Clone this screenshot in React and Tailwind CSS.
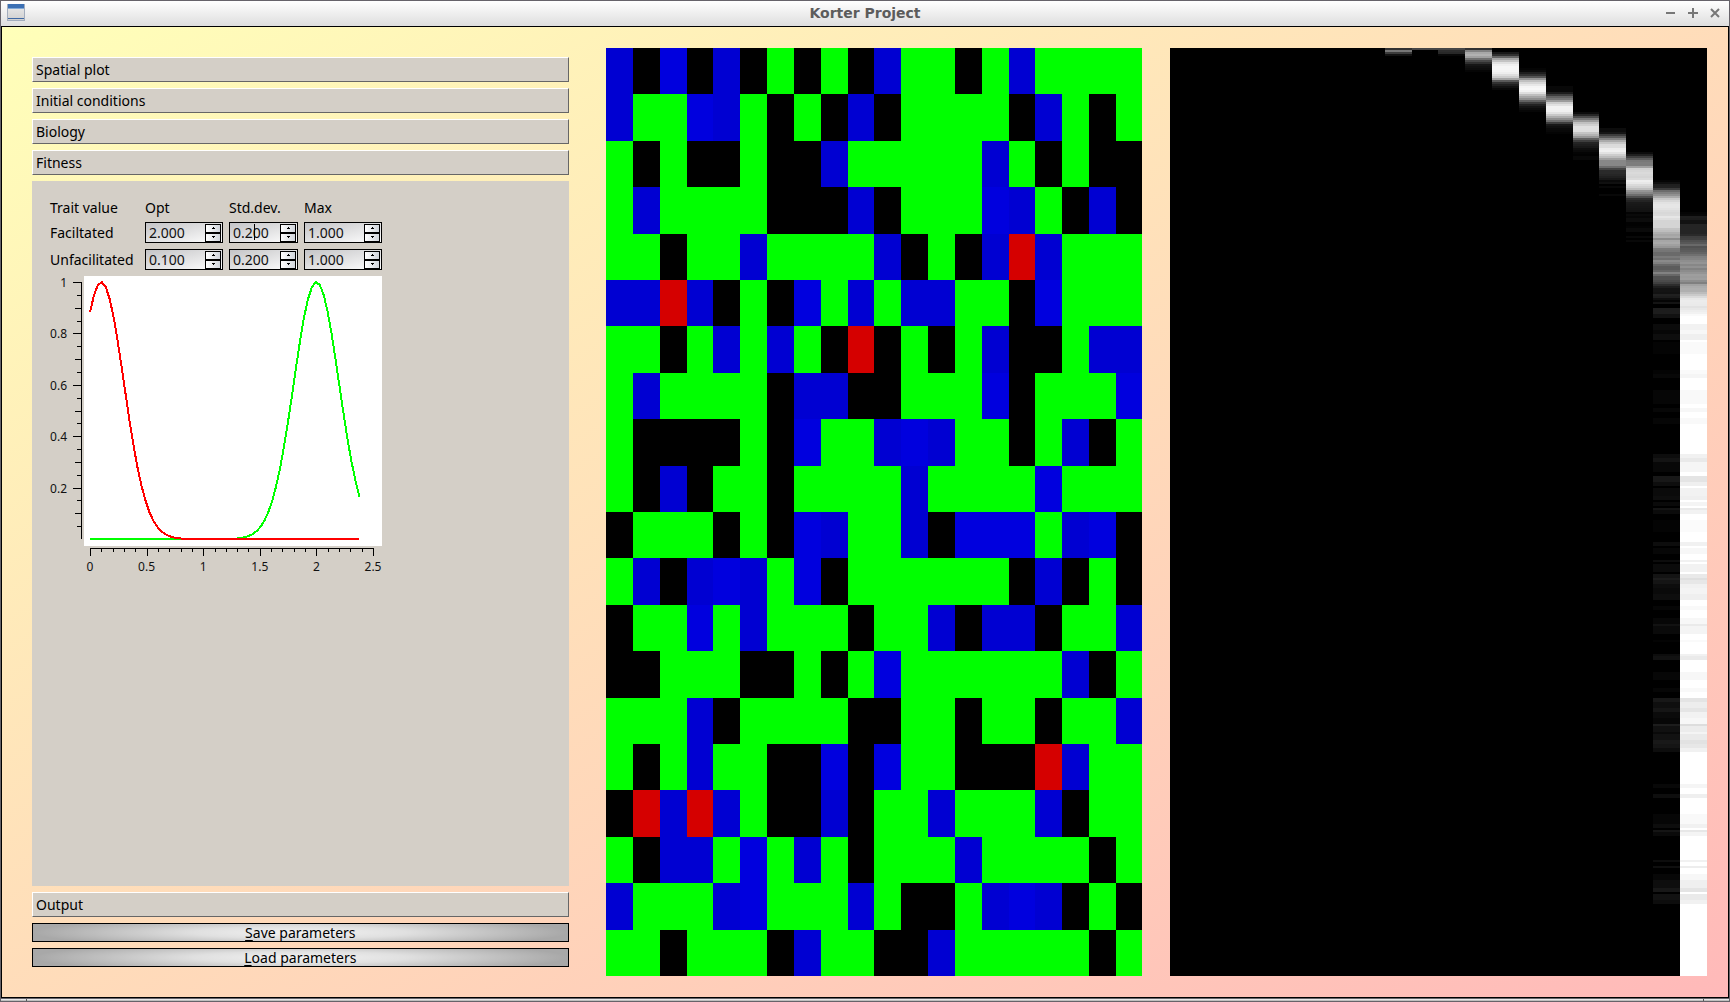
import React from "react";

const CELLS = [
  "BkCkBkGkGkBGGkGBGGGG",
  "BGGCBGkGkBkGGGGkBGkG",
  "GkGkkGkkBGGGGGBGkGkk",
  "GBGGGGkkkBkGGGCBGkBk",
  "GGkGGBGGGGBkGkBRBGGG",
  "BBRBkGkCGBGBBGGkCGGG",
  "GGkGBGBGkRkGkGBkkGBB",
  "GBGGGGkBBkkGGGCkGGGC",
  "GkkkkGkCGGBCBGGkGBkG",
  "GkBkGGkGGGGBGGGGCGGG",
  "kGGGkGkCBGGBkCCCGBCk",
  "GBkBCBGCkGGGGGGkBkGk",
  "kGGCGBGGGkGGBkBBkGGB",
  "kkGGGkkGkGCGGGGGGBkG",
  "GGGBkGGGGkkGGkGGkGGB",
  "GkGBGGkkCkCGGkkkRBGG",
  "kRBRBGkkBkGGBGGGBkGG",
  "GkBBGCGBGkGGGBGGGGkG",
  "BGGGBCGGGBGkkGBCBkGk",
  "GGkGGGkBGGkkBGGGGGkG",
];
const CELL_COLORS = { B: "#0000d2", C: "#0000de", G: "#00ff00", R: "#d50000" };

/* Each column: [first row, gray level per row...] with 464 rows of history. */
const HISTORY = [
  { col: 8, start: 0, values: [50, 118, 60, 18] },
  { col: 9, start: 0, values: [70] },
  { col: 10, start: 0, values: [70, 45, 40, 8] },
  { col: 11, start: 0, values: [50, 130, 168, 178, 160, 112, 72, 48, 22, 16, 12, 5] },
  { col: 12, start: 2, values: [24, 48, 100, 165, 195, 225, 240, 246, 246, 244, 238, 222, 205, 165, 90, 50, 32, 18, 8] },
  { col: 13, start: 10, values: [4, 10, 30, 50, 85, 148, 192, 215, 232, 245, 248, 242, 222, 190, 165, 142, 98, 60, 34, 20, 12, 6] },
  { col: 14, start: 19, values: [8, 8, 8, 28, 62, 98, 118, 155, 205, 225, 242, 242, 240, 226, 200, 172, 142, 110, 62, 24, 16, 10, 8, 4] },
  { col: 15, start: 32, values: [12, 38, 75, 118, 155, 192, 208, 224, 224, 222, 196, 178, 150, 95, 62, 36, 30, 24, 14, 10, 4, 2, 8, 8] },
  { col: 16, start: 40, values: [12, 12, 22, 60, 90, 130, 170, 198, 218, 220, 236, 240, 226, 205, 188, 160, 135, 135, 135, 108, 68, 42, 42, 38, 32, 24, 10, 16, 0, 8, 0, 0, 0, 8] },
  { col: 17, start: 52, values: [12, 32, 62, 92, 120, 125, 125, 160, 208, 214, 218, 215, 212, 218, 238, 232, 218, 208, 190, 150, 135, 110, 78, 45, 36, 26, 24, 22, 20, 18, 4, 10, 6, 12, 12, 2, 2, 4, 10, 10, 0, 0, 8, 0, 8] },
  { col: 18, start: 66, values: [5, 16, 32, 34, 60, 108, 128, 145, 170, 200, 215, 226, 230, 230, 226, 220, 216, 218, 230, 222, 212, 212, 212, 212, 195, 190, 175, 165, 170, 140, 166, 170, 160, 150, 122, 118, 106, 106, 122, 112, 138, 128, 104, 92, 92, 102, 130, 104, 82, 82, 75, 64, 45, 30, 20, 20, 18, 32, 28, 14, 5, 20] },
  { col: 19, start: 82, values: [5, 8, 30, 28, 18, 18, 36, 36, 36, 36, 36, 42, 62, 65, 80, 88, 105, 82, 88, 92, 100, 112, 128, 132, 142, 148, 135, 145, 130, 140, 148, 158, 155, 158, 142, 128, 162, 172, 176, 175, 188, 202, 218, 232, 236, 235, 234, 226, 232, 238, 242, 250] },
];

/* Faint late bands: [first row, rows, level]; the last column is their inverse. */
const BANDS = [
  [126, 4, 30], [130, 3, 42], [133, 2, 26], [138, 3, 16], [141, 2, 10], [143, 3, 20],
  [147, 6, 6], [161, 2, 6], [163, 2, 12], [171, 7, 8], [180, 2, 10], [185, 3, 8],
  [203, 2, 18], [205, 2, 28], [207, 5, 12], [214, 3, 34], [217, 2, 20], [220, 4, 16],
  [224, 2, 20], [227, 2, 14], [230, 1, 28], [231, 2, 16], [236, 6, 5], [247, 2, 18],
  [250, 3, 10], [256, 1, 18], [258, 4, 16], [263, 2, 28], [265, 1, 40], [266, 2, 30],
  [268, 2, 18], [270, 3, 14], [273, 3, 20], [279, 2, 8], [285, 3, 10], [288, 1, 26],
  [289, 4, 14], [296, 1, 6], [303, 1, 18], [304, 2, 26], [312, 4, 10], [320, 2, 8],
  [325, 2, 34], [327, 3, 22], [330, 2, 32], [332, 3, 16], [335, 3, 10], [338, 1, 42],
  [339, 3, 24], [342, 1, 14], [343, 3, 26], [346, 2, 36], [348, 2, 30], [350, 2, 18],
  [368, 2, 12], [373, 2, 20], [383, 5, 8], [388, 2, 18], [391, 1, 30], [392, 2, 14],
  [406, 1, 18], [409, 1, 22], [413, 3, 10], [416, 4, 20], [420, 2, 34], [423, 3, 26],
  [426, 2, 18],
];

const gray = (v) => `rgb(${v},${v},${v})`;

function SpatialPlot() {
  return (
    <svg className="h-full min-w-0 flex-1 bg-black" viewBox="0 0 20 20" preserveAspectRatio="none" shapeRendering="crispEdges" role="img" aria-label="Spatial plot">
      {CELLS.flatMap((row, y) =>
        [...row].map((c, x) =>
          c === "k" ? null : <rect key={`${x}-${y}`} x={x} y={y} width="1" height="1" fill={CELL_COLORS[c]} />
        )
      )}
    </svg>
  );
}

function TraitHistory() {
  return (
    <svg className="h-full min-w-0 flex-1 bg-black" viewBox="0 0 20 464" preserveAspectRatio="none" shapeRendering="crispEdges" role="img" aria-label="Trait history">
      <rect x="19" y="134" width="1" height="330" fill="#ffffff" />
      {HISTORY.flatMap(({ col, start, values }) =>
        values.map((v, i) => <rect key={`${col}-${i}`} x={col} y={start + i} width="1" height="1" fill={gray(v)} />)
      )}
      {BANDS.map(([y, h, v]) => (
        <g key={y}>
          {y > 127 && <rect x="18" y={y} width="1" height={h} fill={gray(Math.round(v * 0.7))} />}
          {y > 133 && <rect x="19" y={y} width="1" height={h} fill={gray(255 - Math.round(v * 0.8))} />}
        </g>
      ))}
    </svg>
  );
}

const px = (t) => 6 + (t * 283) / 2.5;
const py = (f) => 263 - f * 257;
function curve(opt) {
  const pts = [];
  for (let i = 0; i <= 68; i++) {
    const t = i * 0.035;
    pts.push(`${px(t).toFixed(1)},${py(Math.exp(-((t - opt) ** 2) / 0.08)).toFixed(1)}`);
  }
  return pts.join(" ");
}

function FitnessChart() {
  return (
    <svg width="340" height="304" viewBox="-38 0 340 304" className="block overflow-visible" role="img" aria-label="Fitness curves">
      <rect x="0" y="0" width="298" height="270" fill="#fff" />
      <polyline points={curve(2)} fill="none" stroke="#00ff00" strokeWidth="2" shapeRendering="crispEdges" />
      <polyline points={curve(0.1)} fill="none" stroke="#ff0000" strokeWidth="2" shapeRendering="crispEdges" />
      <g stroke="#000" strokeWidth="1" shapeRendering="crispEdges">
        <line x1="-2.5" y1="6" x2="-2.5" y2="263" />
        {Array.from({ length: 20 }, (_, i) => {
          const y = Math.round(py((i + 1) / 20)) + 0.5;
          const n = (i + 1) % 4 === 0 ? 9 : (i + 1) % 2 === 0 ? 7 : 5;
          return <line key={i} x1={-2 - n} x2="-2" y1={y} y2={y} />;
        })}
        <line x1="6" y1="272.5" x2="290" y2="272.5" />
        {Array.from({ length: 26 }, (_, i) => {
          const x = Math.round(px(i / 10)) + 0.5;
          return <line key={i} x1={x} x2={x} y1="272" y2={i % 5 === 0 ? 280 : 276} />;
        })}
      </g>
      <g fontSize="12" fill="#111">
        {[0.2, 0.4, 0.6, 0.8, 1].map((v) => (
          <text key={v} x="-17" y={py(v) + 5} textAnchor="end">{v}</text>
        ))}
        {[0, 0.5, 1, 1.5, 2, 2.5].map((v) => (
          <text key={v} x={px(v)} y="295" textAnchor="middle">{v}</text>
        ))}
      </g>
    </svg>
  );
}

function StepButton({ label, up }) {
  return (
    <button type="button" aria-label={label} className="flex h-[9px] w-4 items-center justify-center border border-black bg-linear-to-r from-white to-gray-300">
      <svg width="3" height="2" viewBox="0 0 3 2" shapeRendering="crispEdges" aria-hidden="true">
        <path d={up ? "M1 0h1v1h1v1H0V1h1z" : "M0 0h3v1H2v1H1V1H0z"} fill="#000" />
      </svg>
    </button>
  );
}

function SpinBox({ label, value, caret }) {
  return (
    <div className="relative flex h-[21px] items-center border border-black bg-linear-to-br from-[#c4c4c6] to-white pr-px">
      <input aria-label={label} defaultValue={value} className="h-full w-0 min-w-0 flex-1 bg-transparent pl-[3px] text-sm text-[#111] outline-none" />
      {caret && <span className="absolute top-px left-6 h-4 w-px bg-black" />}
      <div className="flex flex-col">
        <StepButton up label={`Increase ${label}`} />
        <StepButton label={`Decrease ${label}`} />
      </div>
    </div>
  );
}

function SectionBar({ children }) {
  return (
    <button type="button" className="h-[25px] shrink-0 border border-t-white border-l-white border-r-[#666] border-b-[#666] bg-[#d4cfc7] pl-[3px] text-left text-sm leading-none">
      {children}
    </button>
  );
}

function ActionButton({ mnemonic, children }) {
  return (
    <button type="button" className="flex h-[19px] shrink-0 items-center justify-center border border-black bg-[radial-gradient(ellipse_50%_90%_at_center,#f2f2f2_0%,#e0e0e0_40%,#a8a8a8_100%)] text-sm leading-none">
      <span><span className="underline underline-offset-2">{mnemonic}</span>{children}</span>
    </button>
  );
}

const ROWS = [
  { name: "Faciltated", values: ["2.000", "0.200", "1.000"], caret: 1 },
  { name: "Unfacilitated", values: ["0.100", "0.200", "1.000"], caret: -1 },
];
const COLUMNS = ["Opt", "Std.dev.", "Max"];

export default function App() {
  return (
    <div className="flex h-screen flex-col overflow-hidden border border-b-0 border-[#66636a] bg-white font-['Noto_Sans',sans-serif] text-sm text-black">
      <header className="grid h-[25px] shrink-0 grid-cols-[1fr_auto_1fr] items-center bg-linear-to-b from-white to-[#dedede] px-1.5 pb-0.5">
        <svg width="18" height="19" viewBox="0 0 18 19" aria-hidden="true">
          <defs>
            <linearGradient id="pane" x1="0" y1="0" x2="0" y2="1">
              <stop offset="0" stopColor="#ececec" />
              <stop offset="1" stopColor="#cfcfcf" />
            </linearGradient>
          </defs>
          <rect x="0.5" y="1.5" width="17" height="16" fill="url(#pane)" stroke="#a3adbd" />
          <rect x="1" y="1" width="16" height="4" fill="#3c70b4" />
          <rect x="1" y="5" width="16" height="1" fill="#83a9d6" />
          <rect x="1" y="15" width="16" height="1" fill="#3e68a4" />
        </svg>
        <h1 className="font-['DejaVu_Sans',sans-serif] text-sm leading-none font-bold text-[#5c5c5c]">Korter Project</h1>
        <div className="flex items-center justify-end gap-3 pr-[3px] text-[#777]">
          <button type="button" aria-label="Minimize">
            <svg width="10" height="10" viewBox="0 0 10 10" className="block"><path d="M0 5h9" stroke="currentColor" strokeWidth="2" /></svg>
          </button>
          <button type="button" aria-label="Maximize">
            <svg width="10" height="10" viewBox="0 0 10 10" className="block"><path d="M0 5h10M5 0v10" stroke="currentColor" strokeWidth="2" /></svg>
          </button>
          <button type="button" aria-label="Close">
            <svg width="10" height="10" viewBox="0 0 10 10" className="block"><path d="M1 1l8 8M9 1l-8 8" stroke="currentColor" strokeWidth="2" /></svg>
          </button>
        </div>
      </header>

      <main className="flex min-h-0 flex-1 border border-black bg-linear-to-br from-[#ffffb9] to-[#ffb9b9] py-[21px] pr-[21px] pl-[30px]">
        <section className="flex min-w-0 flex-1 flex-col gap-1.5 py-[9px] pr-px">
          <SectionBar>Spatial plot</SectionBar>
          <SectionBar>Initial conditions</SectionBar>
          <SectionBar>Biology</SectionBar>
          <SectionBar>Fitness</SectionBar>
          <div className="min-h-0 flex-1 overflow-hidden bg-[#d4cfc7] pt-[18px] pl-[18px]">
            <div className="grid w-[332px] grid-cols-[89px_78px_69px_78px] gap-x-1.5 gap-y-1.5">
              <span className="leading-[17px] whitespace-nowrap">Trait value</span>
              {COLUMNS.map((c) => (
                <span key={c} className="leading-[17px] whitespace-nowrap">{c}</span>
              ))}
              {ROWS.map((r) => (
                <React.Fragment key={r.name}>
                  <span className="leading-[21px] whitespace-nowrap">{r.name}</span>
                  {r.values.map((v, i) => (
                    <SpinBox key={i} label={`${r.name} ${COLUMNS[i]}`} value={v} caret={r.caret === i} />
                  ))}
                </React.Fragment>
              ))}
            </div>
            <div className="mt-1.5 -ml-1">
              <FitnessChart />
            </div>
          </div>
          <SectionBar>Output</SectionBar>
          <ActionButton mnemonic="S">ave parameters</ActionButton>
          <ActionButton mnemonic="L">oad parameters</ActionButton>
        </section>
        <div className="ml-9 flex min-w-0 flex-1">
          <SpatialPlot />
        </div>
        <div className="ml-7 flex min-w-0 flex-1">
          <TraitHistory />
        </div>
      </main>
      <footer className="flex h-1 shrink-0 justify-between border-t border-b border-[#66636a] bg-linear-to-b from-white to-[#aaa] px-[25px]">
        <span className="w-px bg-[#555]" />
        <span className="w-px bg-[#555]" />
      </footer>
    </div>
  );
}
